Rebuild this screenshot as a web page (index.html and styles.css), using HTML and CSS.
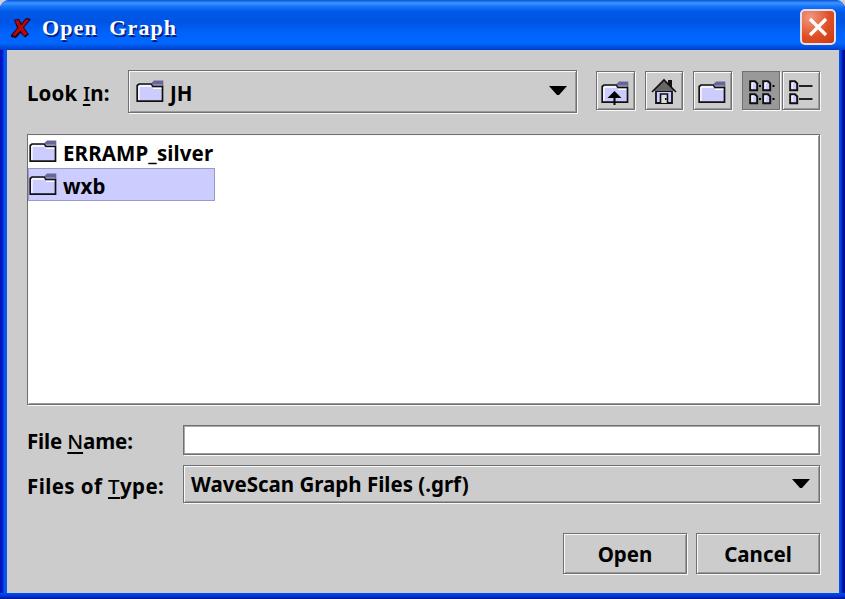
FILE: index.html
```html
<!DOCTYPE html>
<html lang="en">
<head>
<meta charset="utf-8">
<title>Open Graph</title>
<link rel="stylesheet" href="styles.css">
</head>
<body>
<svg class="defs" width="0" height="0">
  <symbol id="folder" viewBox="0 0 28 23">
    <path d="M2 5.5 4 4H16V8H26V20.5H2Z" fill="#ccf"/>
    <path d="M2.8 20V6H15M17 8.3H26" fill="none" stroke="#fff" stroke-width="1.6"/>
    <path d="M1.2 21.2V5.5L3 4H15.5L17 6.3H26.5V21.2Z" fill="none" stroke="#111" stroke-width="1.7"/>
    <path d="M15.5 3 18 .5H27.3V5.3H16.5Z" fill="#669"/>
    <path d="M17 4.8H26" stroke="#99c" stroke-width="1"/>
  </symbol>
  <symbol id="file" viewBox="0 0 10 12">
    <path d="M1.2 1.2H6L8.2 3.4V10.2H1.2Z" fill="#ccf" stroke="#111" stroke-width="2"/>
    <path d="M3 9V3H5" fill="none" stroke="#fff" stroke-width="1.2"/>
  </symbol>
</svg>
<div class="window">
  <header class="titlebar">
    <svg class="app-icon" width="20" height="22" viewBox="0 0 20 22"><path d="M3 2.5 8 2 10.5 6.5 15 1 20 2 13 10.5 18 17.5 14 20.5 9.5 16 5 21 0 20 0 18 6 11Z" fill="#280018"/><path d="M4 3.5 7.5 3 10 8.5 15 2.5 18 2.8 12 10.5 16.5 17 13 18.8 9.5 13.5 4 19 1.5 18 7.5 10.5Z" fill="#b80808"/></svg>
    <h1 class="title">Open Graph</h1>
    <button class="close" aria-label="Close"><svg width="20" height="20" viewBox="0 0 20 20"><path d="M2 2 18 18M18 2 2 18" stroke="#fff" stroke-width="3.2"/></svg></button>
  </header>
  <main class="content">
    <div class="look-row">
      <label class="label look">Look <u>I</u>n:</label>
      <div class="bevel combo look-combo"><svg class="folder" width="28" height="23"><use href="#folder"/></svg><span class="jh">JH</span><svg class="arrow" width="18" height="10" viewBox="0 0 18 10"><path d="M0 0H18L10 9H8Z"/></svg></div>
      <div class="tools">
        <button class="bevel tool" aria-label="Up"><svg width="36" height="36" viewBox="0 0 36 36"><use href="#folder" x="4" y="8" width="28" height="23"/><path d="M17.5 18 24.5 25H10.5ZM16.5 22H18.5V32H16.5Z"/></svg></button>
        <button class="bevel tool" aria-label="Home"><svg width="36" height="36" viewBox="0 0 36 36"><path d="M22 7H26V15H22Z" fill="#111"/><path d="M10 18H26V30H10Z" fill="#ccf" stroke="#111" stroke-width="1.8"/><path d="M18 7 29 18H7Z" fill="#666"/><path d="M6 19 18 7 30 19" fill="none" stroke="#111" stroke-width="1.6"/><path d="M14.5 30V21H21.5V30" fill="#ddd" stroke="#111" stroke-width="1.6"/><path d="M19 25H20.5V27H19Z"/></svg></button>
        <button class="bevel tool" aria-label="New folder"><svg width="36" height="36" viewBox="0 0 36 36"><use href="#folder" x="4" y="8" width="28" height="23"/></svg></button>
        <div class="views">
          <button class="bevel tool pressed" aria-label="List"><svg width="36" height="36" viewBox="0 0 36 36"><use href="#file" x="6" y="7" width="10" height="12"/><use href="#file" x="19" y="7" width="10" height="12"/><use href="#file" x="6" y="20" width="10" height="12"/><use href="#file" x="19" y="20" width="10" height="12"/><path d="M16 12H18V14H16ZM29.5 12H31.5V14H29.5ZM16 25H18V27H16ZM29.5 25H31.5V27H29.5Z"/></svg></button>
          <button class="bevel tool" aria-label="Details"><svg width="36" height="36" viewBox="0 0 36 36"><use href="#file" x="6" y="7" width="10" height="12"/><use href="#file" x="6" y="20" width="10" height="12"/><path d="M16 13H29.5M16 26H29.5" stroke="#222" stroke-width="1.8"/></svg></button>
        </div>
      </div>
    </div>
    <div class="bevel list">
      <div class="item"><svg class="folder" width="28" height="23"><use href="#folder"/></svg><span class="err">ERRAMP_silver</span></div>
      <div class="item selected"><svg class="folder" width="28" height="23"><use href="#folder"/></svg><span class="wxb">wxb</span></div>
    </div>
    <div class="form">
      <label class="label name">File <u>N</u>ame:</label>
      <div class="bevel field"></div>
      <label class="label type">Files of <u>T</u>ype:</label>
      <div class="bevel combo type-combo"><span class="filter">WaveScan Graph Files (.grf)</span><svg class="arrow" width="18" height="10" viewBox="0 0 18 10"><path d="M0 0H18L10 9H8Z"/></svg></div>
    </div>
    <div class="actions">
      <button class="bevel action"><span class="open">Open</span></button>
      <button class="bevel action"><span class="cancel">Cancel</span></button>
    </div>
  </main>
</div>
</body>
</html>
```
FILE: styles.css
```css
* { box-sizing: border-box; }
body { margin: 0; background: #ccd0dc; overflow: hidden; font: 700 20.5px/28px "Noto Sans", "Open Sans", sans-serif; color: #000; }
.defs { position: absolute; }
.window { width: 845px; height: 599px; display: flex; flex-direction: column; border-radius: 9px 9px 0 0; overflow: hidden; background: linear-gradient(90deg, #0010c0 0, #0020d0 3px, #0754ee 4px, #0754ee 7px, #0754ee 839px, #0040e0 841px, #0010a0 843px, #001090 845px); }
.titlebar { height: 50px; flex: none; display: flex; align-items: center; padding: 4px 9px 0 11px; background: linear-gradient(#0850d8 0, #3c96ff 3px, #1470f8 7px, #0058e6 12px, #0054e4 22px, #0062fa 32px, #0068ff 43px, #0050e0 47px, #003cc8 50px); }
.app-icon { flex: none; margin-top: 2px; }
.title { margin: 1px auto 0 11px; font: bold 22px/28px "Liberation Serif", serif; letter-spacing: 1.1px; word-spacing: 5px; color: #fff; text-shadow: 1.5px 1.5px 0 #0a1c80; white-space: nowrap; }
.close { width: 36px; height: 36px; padding: 0; display: grid; place-items: center; border: 2px solid #e4e0f0; border-radius: 5px; background: radial-gradient(circle at 25% 20%, #f09880, #e05028 55%, #c83808); }
.content { flex: none; height: 543px; margin: 0 6px 0 7px; padding: 20px 19px 0 20px; background: #ccc; }
.window::after { content: ""; flex: 1; background: linear-gradient(#0050ee, #0030d0 60%, #001090); }
.bevel { border: 1px solid #707070; box-shadow: inset 1px 1px #fafafa, 1px 1px #fafafa, inset -1px -1px #999; background: #ccc; }
button { font: inherit; color: inherit; padding: 0; }
.label, .combo span, .item span, .action span { white-space: pre; }
u { font-weight: 500; text-decoration: underline; text-decoration-thickness: 1.5px; text-underline-offset: 3px; text-decoration-skip-ink: none; }
.look-row { display: flex; height: 43px; }
.look { width: 101px; padding-top: 9px; letter-spacing: .15px; }
.combo { display: flex; align-items: center; }
.look-combo { width: 449px; height: 43px; padding: 0 9px 1px 7px; }
.folder { flex: none; }
.arrow { margin-left: auto; flex: none; }
.jh { margin: 3px 0 0 6px; }
.tools { display: flex; gap: 10px; margin: 1px 0 0 19px; }
.tool { width: 38.5px; height: 39px; display: grid; place-items: center; border-radius: 0; }
.pressed { background: #999; box-shadow: 1px 1px #fafafa; }
.views { display: flex; gap: 1.5px; }
.list { height: 271px; margin-top: 21px; padding: 0; background: #fff; }
.item { display: flex; align-items: center; width: 187px; height: 33px; padding-left: 1px; }
.item span { margin: 2px 0 0 6px; }
.err { letter-spacing: .12px; }
.selected { background: #ccf; outline: 1.5px solid #99c; outline-offset: -1px; }
.form { display: grid; grid-template-columns: 156px 1fr; grid-template-rows: 30px 38px; row-gap: 10px; margin-top: 20px; }
.name { padding-top: 2px; letter-spacing: -.15px; }
.type { padding-top: 7px; letter-spacing: .4px; }
.field { background: #fff; box-shadow: 1px 1px #fafafa, inset -1px -1px #999, inset 1px 1px #aaa; }
.type-combo { padding: 0 9px 0 7px; }
.actions { display: flex; justify-content: flex-end; gap: 9px; margin-top: 30px; }
.action { width: 124px; height: 41px; border-radius: 0; }
```
